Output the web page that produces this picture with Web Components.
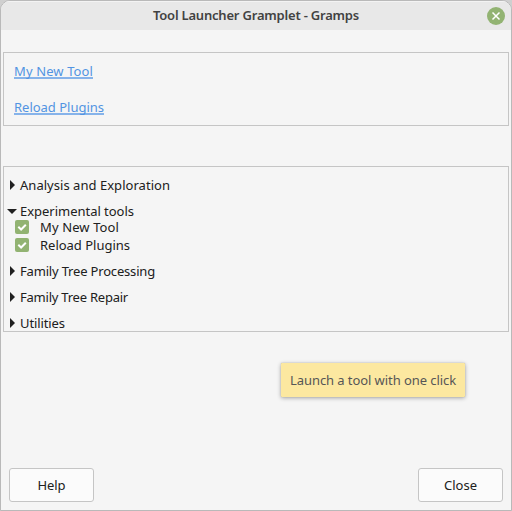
<!DOCTYPE html>
<html lang="en"><head><meta charset="utf-8"><title>Tool Launcher Gramplet - Gramps</title>
<style>
html,body{margin:0;height:100%;overflow:hidden;background:#cfcfcf}
body{font:13px/18px "Noto Sans","Open Sans",sans-serif;color:#202020}
</style></head><body>
<app-window>
  <title-bar slot="title"><fit-text width="206">Tool Launcher Gramplet - Gramps</fit-text></title-bar>
  <list-panel style="height:72px;margin-top:22px;--pad:9px 10px">
    <tool-link><fit-text width="79">My New Tool</fit-text></tool-link>
    <tool-link><fit-text width="90">Reload Plugins</fit-text></tool-link>
  </list-panel>
  <list-panel style="height:164px;margin-top:40px;--pad:9px 3px 0">
    <tree-group><fit-text slot="label" width="150">Analysis and Exploration</fit-text></tree-group>
    <tree-group open><fit-text slot="label" width="114">Experimental tools</fit-text>
      <check-row><fit-text width="79">My New Tool</fit-text></check-row>
      <check-row><fit-text width="90">Reload Plugins</fit-text></check-row>
    </tree-group>
    <tree-group><fit-text slot="label" width="135">Family Tree Processing</fit-text></tree-group>
    <tree-group><fit-text slot="label" width="108">Family Tree Repair</fit-text></tree-group>
    <tree-group><fit-text slot="label" width="45">Utilities</fit-text></tree-group>
  </list-panel>
  <push-button slot="actions"><fit-text width="28">Help</fit-text></push-button>
  <push-button slot="actions"><fit-text width="33">Close</fit-text></push-button>
  <tool-tip slot="overlay"><fit-text width="166">Launch a tool with one click</fit-text></tool-tip>
</app-window>
<script>
function define(name, html, setup) {
  const template = document.createElement('template');
  template.innerHTML = html;
  customElements.define(name, class extends HTMLElement {
    constructor() {
      super();
      this.attachShadow({mode: 'open'}).append(template.content.cloneNode(true));
    }
    connectedCallback() { if (setup) setup(this); }
  });
}
define('app-window', `<style>
:host{display:flex;flex-direction:column;position:relative;box-sizing:border-box;height:511px;width:512px;background:#f5f5f5;border:1px solid #b9b9b9;border-radius:10px 10px 0 0;overflow:hidden}
main{flex:1;padding:0 2px}
footer{display:flex;justify-content:space-between;padding:0 8px 8px}
</style><slot name="title"></slot><main><slot></slot></main><footer><slot name="actions"></slot></footer><slot name="overlay"></slot>`);
define('title-bar', `<style>
:host{display:grid;grid-template-columns:1fr auto 1fr;align-items:center;height:29px;background:#e8e8e8;box-shadow:inset 0 1px #f3f3f3;font-weight:600;color:#424242}
slot{display:block;grid-column:2;padding-bottom:2px}
svg{display:block;justify-self:end;margin-right:6px}
</style><span></span><slot></slot><svg width="18" height="18" viewBox="0 0 18 18"><circle cx="9" cy="9" r="9" fill="#92b372"/><path d="M5.5 5.5l7 7M12.5 5.5l-7 7" stroke="#fff" stroke-width="1.5"/></svg>`);
define('list-panel', `<style>
:host{display:block;border:1px solid #c5c5c5;padding:0;box-sizing:content-box;overflow:hidden}
div{padding:var(--pad)}
</style><div><slot></slot></div>`);
define('tool-link', `<style>
:host{display:block;height:18px;margin-bottom:18px;color:#5294e2}
span{display:inline-block;height:15px;border-bottom:2px solid #86b3ea}
</style><span><slot></slot></span>`);
define('tree-group', `<style>
:host{display:block;margin-bottom:8px}
header{display:flex;height:18px;align-items:center}
svg{width:13px;height:12px;flex:none}
.down{display:none}
:host([open]) header{height:16px;padding-top:1px;box-sizing:border-box}
:host([open]) .down{display:block}
:host([open]) .right{display:none}
</style><header><svg class="right" viewBox="0 0 13 12"><path d="M3 1v10l5-5z" fill="#202020"/></svg><svg class="down" viewBox="0 0 13 12"><path d="M0 4h10l-5 5z" fill="#202020"/></svg><slot name="label"></slot></header><slot></slot>`);
define('check-row', `<style>
:host{display:flex;align-items:center;height:18px;padding-left:8px}
svg{margin-right:11px;flex:none}
</style><svg width="14" height="14" viewBox="0 0 14 14"><rect width="14" height="14" rx="2" fill="#92b372"/><path d="M3.3 6.8l2.8 2.7 4.7-4.7" fill="none" stroke="#fff" stroke-width="2"/></svg><slot></slot>`);
define('push-button', `<style>
:host{display:flex;align-items:center;justify-content:center;box-sizing:border-box;width:85px;height:34px;border:1px solid #c5c5c5;border-radius:3px;background:#fbfbfb}
</style><slot></slot>`);
define('tool-tip', `<style>
:host{position:absolute;left:280px;top:362px;display:flex;align-items:center;justify-content:center;width:184px;height:34px;background:#fce8a0;border-radius:1px;box-shadow:0 0 1px #999,0 1px 4px #0005;color:#565656}
</style><slot></slot>`);
define('fit-text', `<style>
:host{display:block;white-space:nowrap}
span{display:inline-block}
</style><span><slot></slot></span>`, el => {
  const span = el.shadowRoot.querySelector('span');
  const target = +el.getAttribute('width');
  const length = el.textContent.length;
  span.style.letterSpacing = (target - span.getBoundingClientRect().width) / length + 'px';
});
</script></body></html>
